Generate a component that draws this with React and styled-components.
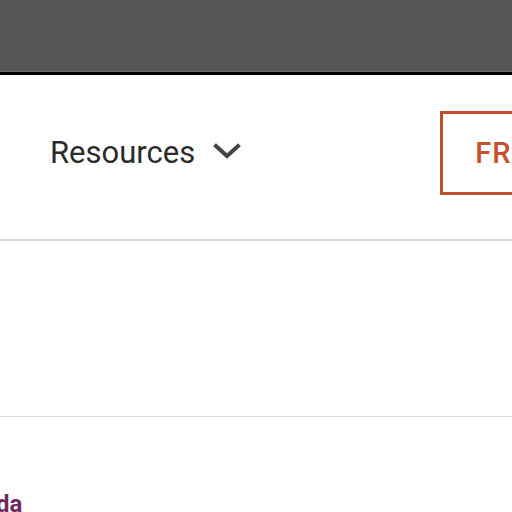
import React from 'react';
import styled, { createGlobalStyle } from 'styled-components';

const GlobalStyle = createGlobalStyle`
  html, body {
    margin: 0;
    padding: 0;
    background: #ffffff;
    font-family: Roboto, "Liberation Sans", Arial, sans-serif;
    overflow: hidden;
  }
`;

const Page = styled.div`
  width: 512px;
  height: 512px;
  overflow: hidden;
  display: flex;
  flex-direction: column;
`;

const TopBar = styled.div`
  height: 71px;
  background: #555555;
  border-bottom: 1px solid #6a6a6a;
  flex-shrink: 0;
`;

const BlackRule = styled.div`
  height: 3px;
  background: #000000;
  flex-shrink: 0;
`;

const Header = styled.header`
  height: 166px;
  box-sizing: border-box;
  display: flex;
  align-items: center;
  padding-left: 50px;
  padding-bottom: 9px;
  white-space: nowrap;
  border-bottom: 2px solid #d9d9d9;
  flex-shrink: 0;
`;

const NavItem = styled.a`
  display: flex;
  align-items: center;
  gap: 18px;
  font-size: 31px;
  color: #2b2b2b;
  text-decoration: none;
`;

const Chevron = styled.svg`
  width: 28px;
  height: 18px;
  margin-top: -2px;
`;

const CtaButton = styled.button`
  margin-left: 199px;
  flex-shrink: 0;
  height: 84px;
  padding: 0 30px 0 32px;
  border: 3px solid #c0502d;
  background: #ffffff;
  color: #c8502a;
  font-family: Roboto, "Liberation Sans", Arial, sans-serif;
  font-size: 29px;
  font-weight: 500;
  letter-spacing: 1px;
  text-align: left;
`;

const Spacer = styled.div`
  height: 175px;
  border-bottom: 1px solid #d5dce1;
  flex-shrink: 0;
`;

const Content = styled.div`
  padding-top: 73px;
  white-space: nowrap;
`;

const Link = styled.a`
  display: inline-block;
  font-size: 24px;
  font-weight: 700;
  color: #70295e;
  text-decoration: none;
  margin-left: -4px;
`;

export default function App() {
  return (
    <Page>
      <GlobalStyle />
      <TopBar />
      <BlackRule />
      <Header>
        <NavItem href="#">
          Resources
          <Chevron viewBox="0 0 28 18" fill="none">
            <path d="M3 3 L14 13 L25 3" stroke="#444" strokeWidth="4" strokeLinecap="square" />
          </Chevron>
        </NavItem>
        <CtaButton>FRANÇAIS</CtaButton>
      </Header>
      <Spacer />
      <Content>
        <Link href="#">da</Link>
      </Content>
    </Page>
  );
}
